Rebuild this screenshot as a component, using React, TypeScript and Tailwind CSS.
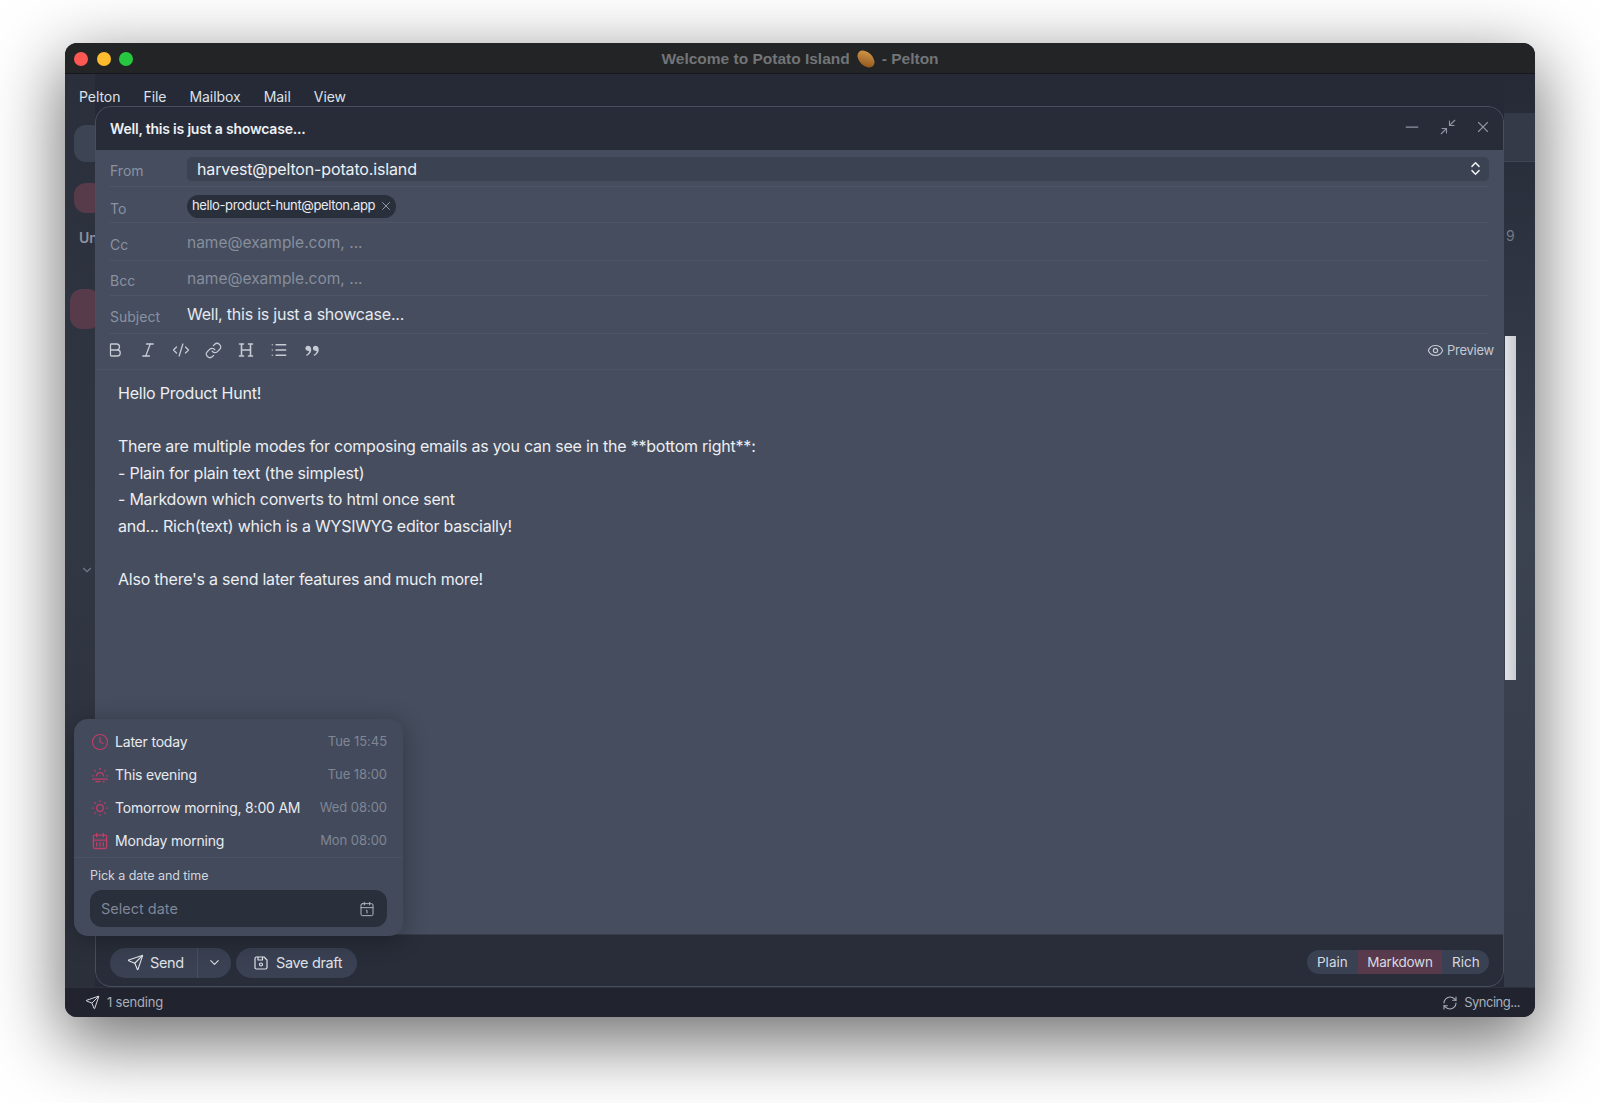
import React from "react";
import {
  Bold,
  Calendar1,
  ChevronDown,
  ChevronsUpDown,
  Clock,
  CodeXml,
  Eye,
  Italic,
  Link,
  List,
  Minimize2,
  Minus,
  RefreshCw,
  Send,
  X,
} from "lucide-react";
import { RiDoubleQuotesR } from "react-icons/ri";
import { TbCalendarWeek, TbDeviceFloppy, TbSun, TbSunset2 } from "react-icons/tb";

const menus = ["Pelton", "File", "Mailbox", "Mail", "View"];

const HeadingIcon = () => (
  <svg width="18" height="18" viewBox="0 0 18 18" fill="none" stroke="currentColor" strokeWidth="1.6" strokeLinecap="round">
    <path d="M4.5 3v12M13.5 3v12M4.5 9h9M2.5 3h4M11.5 3h4M2.5 15h4M11.5 15h4" />
  </svg>
);

const PotatoIcon = () => (
  <svg width="20" height="20" viewBox="0 0 18 18" className="mx-[6px] shrink-0">
    <defs>
      <linearGradient id="potato" x1="0" y1="0" x2="1" y2="1">
        <stop offset="0" stopColor="#d9a04e" />
        <stop offset="1" stopColor="#8a4d17" />
      </linearGradient>
    </defs>
    <ellipse cx="9" cy="9" rx="9" ry="6" transform="rotate(45 9 9)" fill="url(#potato)" />
  </svg>
);

const toolbar = [
  <Bold size={18} strokeWidth={1.7} />,
  <Italic size={18} strokeWidth={1.7} />,
  <CodeXml size={18} strokeWidth={1.7} />,
  <Link size={17} strokeWidth={1.7} />,
  <HeadingIcon />,
  <List size={18} strokeWidth={1.7} />,
  <RiDoubleQuotesR size={21} />,
];

const schedule = [
  { icon: <Clock size={18} strokeWidth={1.6} />, label: "Later today", time: "Tue 15:45" },
  { icon: <TbSunset2 size={20} strokeWidth={1.5} />, label: "This evening", time: "Tue 18:00" },
  { icon: <TbSun size={20} strokeWidth={1.5} />, label: "Tomorrow morning, 8:00 AM", time: "Wed 08:00" },
  { icon: <TbCalendarWeek size={20} strokeWidth={1.6} />, label: "Monday morning", time: "Mon 08:00" },
];

const bodyLines = [
  "Hello Product Hunt!",
  "",
  "There are multiple modes for composing emails as you can see in the **bottom right**:",
  "- Plain for plain text (the simplest)",
  "- Markdown which converts to html once sent",
  "and... Rich(text) which is a WYSIWYG editor bascially!",
  "",
  "Also there's a send later features and much more!",
];

const FieldRow = ({ label, height, children }: { label: string; height: string; children: React.ReactNode }) => (
  <div className={`flex items-center border-b border-white/[0.05] ${height}`}>
    <span className="w-[77px] shrink-0 pt-[3px] text-[14px] text-[#8a92a2]">{label}</span>
    {children}
  </div>
);

const App: React.FC = () => {
  return (
    <div className="w-[1600px] h-[1103px] bg-white pt-[43px] pl-[65px] overflow-hidden font-['Inter',sans-serif]">
      <div className="relative flex flex-col w-[1470px] h-[974px] rounded-[12px] overflow-hidden bg-[#2c313d] shadow-[0_22px_70px_4px_rgba(0,0,0,0.56)]">
        {/* title bar */}
        <div className="relative flex items-center justify-center h-[31px] shrink-0 pt-[1px] bg-[#222426] border-b border-[#15171a]">
          <div className="absolute left-[9px] top-[9px] flex gap-[8.5px]">
            <span className="w-[14px] h-[14px] rounded-full bg-[#fc5753]" />
            <span className="w-[14px] h-[14px] rounded-full bg-[#fdbc2e]" />
            <span className="w-[14px] h-[14px] rounded-full bg-[#27c840]" />
          </div>
          <span className="flex items-center text-[15.5px] font-bold text-[#727477] font-['Liberation_Sans',sans-serif]">
            Welcome to Potato Island
            <PotatoIcon />- Pelton
          </span>
        </div>

        {/* app behind the composer */}
        <div className="flex flex-1 min-h-0 justify-between bg-[#252a36]">
          <div className="flex flex-col w-[30px] bg-gradient-to-b from-[#2a2f3b] via-[#323744] to-[#2b2f3a]">
            <div className="h-[51px] shrink-0" />
            <div className="w-[30px] h-[37px] ml-[9px] rounded-[12px] bg-[#3d4453] shrink-0" />
            <div className="w-[30px] h-[30px] ml-[9px] mt-[21px] rounded-[12px] bg-[#573b4a] shrink-0" />
            <span className="ml-[14px] mt-[14px] text-[14px] font-semibold text-[#8d93a1]">Un</span>
            <div className="w-[30px] h-[40px] ml-[5px] mt-[41px] rounded-[12px] bg-[#573b4a] shrink-0" />
            <ChevronDown size={14} className="ml-[15px] mt-[234px] text-[#707685] shrink-0" />
          </div>
          <div className="flex flex-col w-[31px] overflow-hidden bg-gradient-to-b from-[#252a36] via-[#3b4250] to-[#353b49]">
            <div className="h-[39px] shrink-0" />
            <div className="h-[49px] border-b border-white/[0.06] bg-[#343a47] shrink-0" />
            <span className="ml-[2px] mt-[63px] text-[14px] text-[#727988]">9</span>
            <div className="w-[11px] h-[344px] ml-[1px] mt-[90px] bg-gradient-to-r from-[#dfe1e5] to-[#c9ccd2] shrink-0" />
          </div>
        </div>

        {/* status bar */}
        <div className="flex items-center justify-between h-[30px] shrink-0 pl-[20px] pr-[15px] bg-[#21242e] border-t border-white/[0.06] text-[13px] text-[#a9aeb9]">
          <div className="flex items-center gap-[7px]">
            <Send size={15} strokeWidth={1.6} className="text-[#d5d8df]" />
            <span className="tracking-[-0.2px]">1 sending</span>
          </div>
          <div className="flex items-center gap-[6px]">
            <RefreshCw size={16} strokeWidth={1.6} className="text-[#a9aeb9]" />
            <span className="tracking-[-0.5px]">Syncing...</span>
          </div>
        </div>

        {/* menu bar, over the blurred app */}
        <div className="absolute left-[14px] top-[43px] flex gap-[23px] text-[14px] leading-[21px] tracking-[-0.05px] text-[#dde1e8]">
          {menus.map((m) => (
            <span key={m}>{m}</span>
          ))}
        </div>

        {/* composer */}
        <div className="absolute left-[30px] top-[63px] flex flex-col w-[1409px] h-[881px] rounded-[16px] overflow-hidden bg-[#454d5e] border border-[#474e5d]">
          <div className="flex items-center justify-between h-[43px] shrink-0 pl-[14px] pr-[10px] pb-[4px] bg-[#272c38]">
            <span className="pt-[4px] text-[14px] font-semibold tracking-[-0.2px] text-[#eef0f4]">Well, this is just a showcase...</span>
            <div className="flex items-center gap-[15.5px] text-[#8e94a1]">
              <span className="flex justify-center w-[20px]">
                <Minus size={20} strokeWidth={1.5} />
              </span>
              <span className="flex justify-center w-[20px]">
                <Minimize2 size={18} strokeWidth={1.5} />
              </span>
              <span className="flex justify-center w-[20px]">
                <X size={18} strokeWidth={1.5} />
              </span>
            </div>
          </div>

          <div className="px-[14px]">
            <FieldRow label="From" height="h-[37px] pt-[1px]">
              <div className="flex items-center justify-between flex-1 h-[25px] mt-[1px] rounded-[5px] pl-[10px] pr-[5px] bg-[#3b4352] border-b border-white/[0.06] text-[16px] tracking-[-0.15px] text-[#eef0f4]">
                <span>harvest@pelton-potato.island</span>
                <ChevronsUpDown size={17} strokeWidth={2} className="text-[#eef0f4]" />
              </div>
            </FieldRow>
            <FieldRow label="To" height="h-[36px] pt-[4px]">
              <div className="flex items-center gap-[4px] h-[23px] -mt-[1px] rounded-full pl-[5px] pr-[3px] bg-[#2a2f3c] text-[13px] tracking-[-0.38px] text-[#e9ebf0]">
                <span>hello-product-hunt@pelton.app</span>
                <X size={14} strokeWidth={1.6} className="text-[#9aa0ad]" />
              </div>
            </FieldRow>
            <FieldRow label="Cc" height="h-[38px] pt-[2px]">
              <span className="text-[15.5px] text-[#878e9d]">name@example.com, ...</span>
            </FieldRow>
            <FieldRow label="Bcc" height="h-[35px] pt-[2px]">
              <span className="text-[15.5px] text-[#878e9d]">name@example.com, ...</span>
            </FieldRow>
            <FieldRow label="Subject" height="h-[38px]">
              <span className="-mt-[2px] text-[16px] tracking-[-0.23px] text-[#e6e9ee]">Well, this is just a showcase...</span>
            </FieldRow>
          </div>

          <div className="flex items-center justify-between h-[36px] shrink-0 pl-[10px] pr-[9px] pb-[3px] border-b border-white/[0.04]">
            <div className="flex items-center gap-[14.8px] text-[#c6cbd4]">
              {toolbar.map((icon, i) => (
                <span key={i} className="flex items-center justify-center w-[18px] h-[18px]">
                  {icon}
                </span>
              ))}
            </div>
            <div className="flex items-center gap-[3px] text-[13px] tracking-[-0.25px] text-[#c4c9d2]">
              <Eye size={17} strokeWidth={1.6} />
              <span className="pt-[1px]">Preview</span>
            </div>
          </div>

          <div className="flex-1 min-h-0 pl-[22px] pt-[10px] text-[16px] leading-[26.5px] tracking-[-0.23px] text-[#eceef2]">
            {bodyLines.map((line, i) => (
              <div key={i} className="h-[26.5px] whitespace-pre">
                {line}
              </div>
            ))}
          </div>

          <div className="flex items-center justify-between h-[52px] shrink-0 pl-[14px] pr-[14px] pt-[4px] bg-[#282d39] border-t border-white/[0.08]">
            <div className="flex items-center gap-[5px] text-[14.5px] tracking-[-0.35px] text-[#dfe2e8]">
              <div className="flex items-center h-[30px] rounded-full bg-[#3a4152]">
                <div className="flex items-center gap-[6px] w-[88px] h-full pl-[17px] border-r border-white/[0.08]">
                  <Send size={17} strokeWidth={1.6} />
                  <span>Send</span>
                </div>
                <div className="flex items-center justify-center w-[33px]">
                  <ChevronDown size={15} strokeWidth={1.7} />
                </div>
              </div>
              <div className="flex items-center gap-[6px] h-[30px] pl-[16px] pr-[15px] rounded-full bg-[#3a4152]">
                <TbDeviceFloppy size={18} strokeWidth={1.6} />
                <span>Save draft</span>
              </div>
            </div>
            <div className="flex items-center h-[24px] -mt-[1px] rounded-full overflow-hidden bg-[#3a4152] text-[13.5px] text-[#d6d9e0]">
              <span className="flex items-center h-full px-[10px] w-[51px]">Plain</span>
              <span className="flex items-center justify-center h-full w-[84px] tracking-[-0.25px] bg-[#593a4c]">Markdown</span>
              <span className="flex items-center h-full pl-[10px] w-[47px]">Rich</span>
            </div>
          </div>
        </div>

        {/* send later popup */}
        <div className="absolute left-[9px] top-[676px] w-[329px] h-[217px] rounded-[14px] bg-[#434a5b] shadow-[0_4px_24px_rgba(0,0,0,0.3)] px-[16px] pt-[6px]">
          {schedule.map((s) => (
            <div key={s.label} className="flex items-center h-[33px]">
              <span className="flex justify-center w-[20px] text-[#c23c68]">{s.icon}</span>
              <span className="ml-[5px] flex-1 text-[14px] tracking-[-0.2px] text-[#e8eaef]">{s.label}</span>
              <span className="text-[13px] tracking-[-0.05px] text-[#7f8695]">{s.time}</span>
            </div>
          ))}
          <div className="-mx-[16px] border-t border-white/[0.04]" />
          <div className="mt-[9px] text-[12.5px] leading-[18px] tracking-[-0.05px] text-[#d2d6dd]">Pick a date and time</div>
          <div className="flex items-center justify-between h-[37px] mt-[5px] pl-[11px] pr-[12px] pt-[1px] rounded-[12px] bg-[#2a2f3c] text-[14.5px] text-[#7f8695]">
            <span>Select date</span>
            <Calendar1 size={16} strokeWidth={1.5} className="text-[#b0b5c0]" />
          </div>
        </div>
      </div>
    </div>
  );
};

export default App;
